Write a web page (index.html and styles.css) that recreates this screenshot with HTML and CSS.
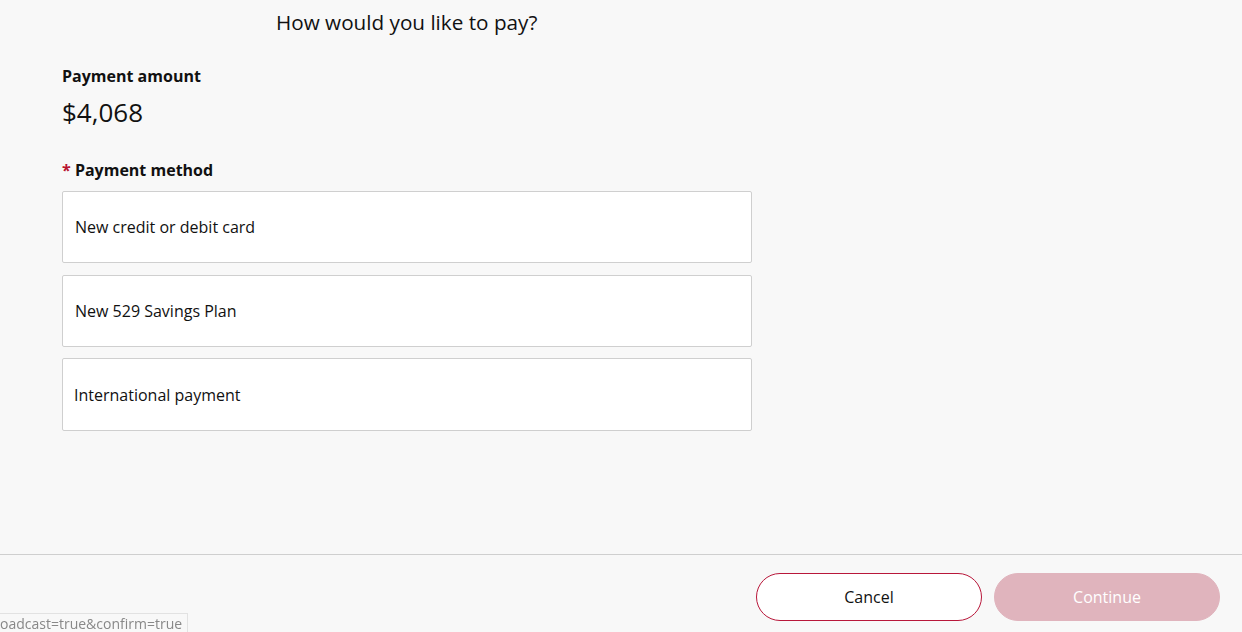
FILE: index.html
```html
<!DOCTYPE html>
<html lang="en">
<head>
<meta charset="utf-8">
<title>How would you like to pay?</title>
<link rel="stylesheet" href="styles.css">
</head>
<body>
<div class="page">
  <main class="content">
    <h1 class="title">How would you like to pay?</h1>
    <section class="amount">
      <div class="label">Payment amount</div>
      <div class="value">$4,068</div>
    </section>
    <section class="method">
      <div class="label"><span class="req">*</span> Payment method</div>
      <div class="options">
        <button class="option" type="button">New credit or debit card</button>
        <button class="option" type="button">New 529 Savings Plan</button>
        <button class="option intl" type="button">International payment</button>
      </div>
    </section>
  </main>
  <footer class="footer">
    <button class="btn cancel" type="button">Cancel</button>
    <button class="btn continue" type="button" disabled>Continue</button>
  </footer>
</div>
<div class="status">oadcast=true&amp;confirm=true</div>
</body>
</html>
```
FILE: styles.css
```css
html, body {
  margin: 0;
  padding: 0;
  background: #f8f8f8;
  font-family: "Open Sans", "Noto Sans", sans-serif;
  color: #111;
}
.page {
  width: 1242px;
  height: 632px;
  display: flex;
  flex-direction: column;
}
.content {
  flex: 1;
  padding: 0 0 0 62px;
}
.title {
  margin: 8px 0 0 214px;
  font-size: 20.7px;
  font-weight: 400;
  line-height: 28px;
  color: #111;
}
.amount {
  margin-top: 30px;
}
.label {
  font-size: 16px;
  font-weight: 700;
  line-height: 20px;
}
.value {
  margin-top: 10px;
  font-size: 26px;
  line-height: 32px;
}
.method {
  margin-top: 32px;
}
.req {
  color: #b8132f;
}
.options {
  margin-top: 11px;
  width: 690px;
  display: flex;
  flex-direction: column;
  gap: 12px;
}
.option {
  height: 72px;
  margin: 0;
  padding: 0 12px;
  background: #fff;
  border: 1px solid #cfcfcf;
  border-radius: 2px;
  text-align: left;
  font-family: "Open Sans", "Noto Sans", sans-serif;
  font-size: 16px;
  color: #111;
}
.option.intl {
  height: 73px;
  margin-top: -1px;
  padding-left: 11px;
}
.footer {
  height: 78px;
  border-top: 1px solid #cfcfcf;
  display: flex;
  justify-content: flex-end;
  align-items: flex-start;
  gap: 12px;
  padding: 18px 22px 0 0;
  box-sizing: border-box;
}
.btn {
  width: 226px;
  height: 48px;
  border-radius: 24px;
  font-family: "Open Sans", "Noto Sans", sans-serif;
  font-size: 16px;
  margin: 0;
  padding: 0;
}
.cancel {
  background: #fff;
  border: 1px solid #b8173a;
  color: #111;
}
.continue {
  background: #e0b4bd;
  border: 1px solid #e0b4bd;
  color: #fff;
}
.status {
  position: fixed;
  left: 0;
  bottom: 0;
  width: 188px;
  height: 19px;
  box-sizing: border-box;
  background: #f8f8f8;
  border: 1px solid #e2e2e2;
  border-left: none;
  border-bottom: none;
  font-family: "Open Sans", "Noto Sans", sans-serif;
  font-size: 14px;
  line-height: 20px;
  color: #888;
  text-align: right;
  padding: 0 5px 0 0;
  white-space: nowrap;
}
```
